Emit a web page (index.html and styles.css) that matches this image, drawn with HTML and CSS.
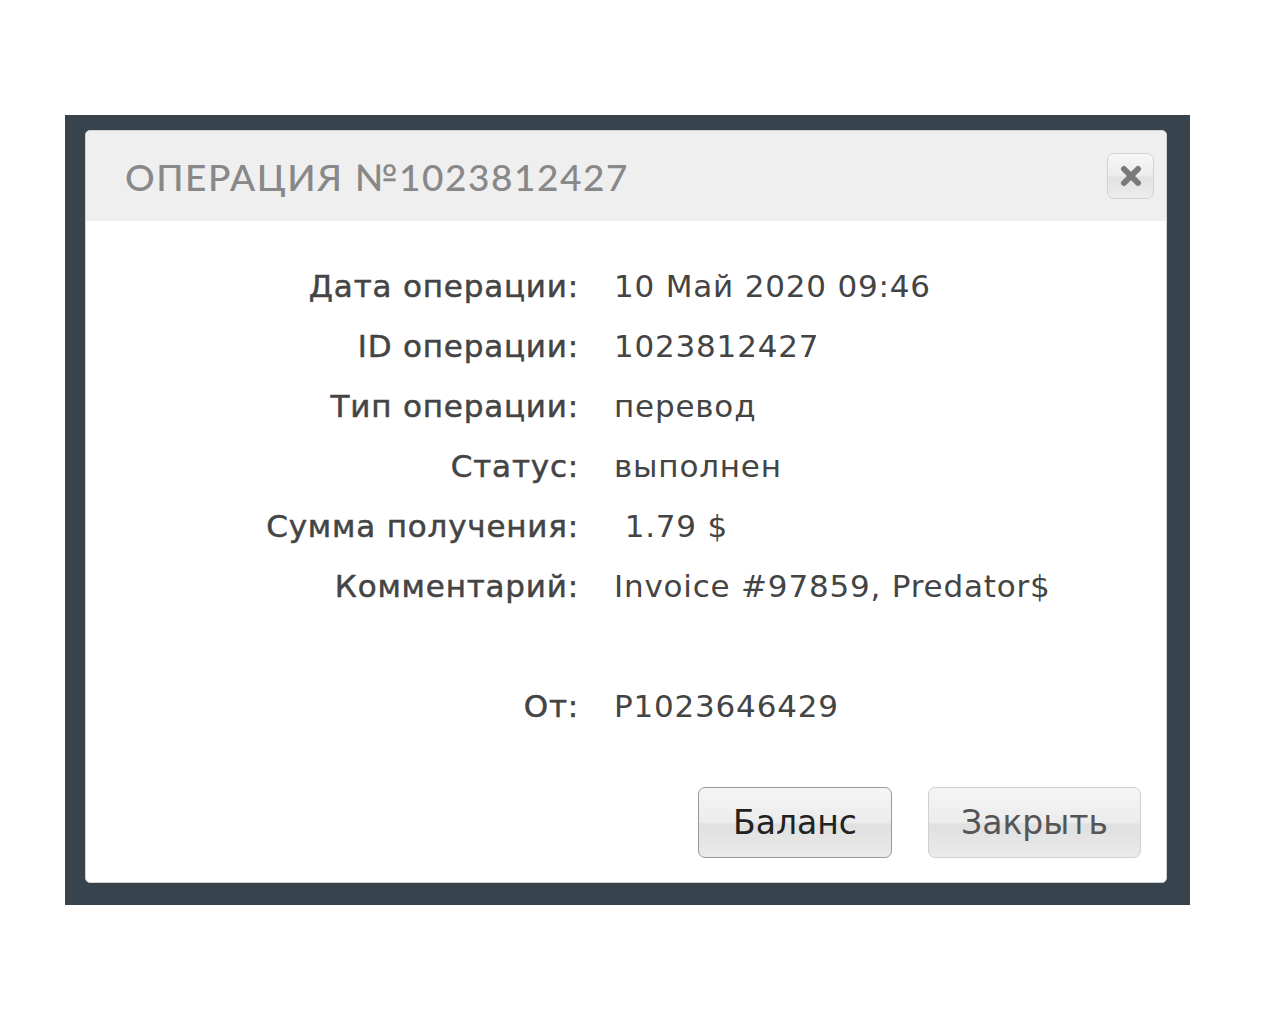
FILE: index.html
```html
<!DOCTYPE html>
<html lang="ru">
  <head>
    <meta charset="UTF-8" />
    <meta name="viewport" content="width=device-width, initial-scale=1.0" />
    <title>Операция</title>
    <link rel="stylesheet" href="styles.css">
  </head>
  <body>
    <div class="backdrop">
      <div class="modal">
        <header class="modal-head">
          <h1>ОПЕРАЦИЯ №1023812427</h1>
          <button class="close-x">
            <svg width="22" height="22" viewBox="0 0 22 22">
              <path d="M4 4 L18 18 M18 4 L4 18" stroke="#7a7a7a" stroke-width="6" stroke-linecap="round" />
            </svg>
          </button>
        </header>
        <div class="details">
          <div class="label">Дата операции:</div>
          <div class="value">10 Май 2020 09:46</div>
          <div class="label">ID операции:</div>
          <div class="value">1023812427</div>
          <div class="label">Тип операции:</div>
          <div class="value">перевод</div>
          <div class="label">Статус:</div>
          <div class="value">выполнен</div>
          <div class="label">Сумма получения:</div>
          <div class="value"> 1.79 $</div>
          <div class="label">Комментарий:</div>
          <div class="value">Invoice #97859, Predator$</div>
          <div class="label"></div>
          <div class="value"></div>
          <div class="label">От:</div>
          <div class="value">P1023646429</div>
        </div>
        <footer class="modal-foot">
          <button class="btn btn-main">Баланс</button>
          <button class="btn">Закрыть</button>
        </footer>
      </div>
    </div>
  </body>
</html>
```

FILE: styles.css
```css
body {
  margin: 0;
  padding: 0;
  background: #fff;
}
.backdrop {
  margin: 115px 0 0 65px;
  width: 1125px;
  height: 790px;
  box-sizing: border-box;
  padding: 15px 0 0 20px;
  background: #37444d;
}
.modal {
  width: 1082px;
  height: 753px;
  box-sizing: border-box;
  background: #fff;
  border: 1px solid #cfd2d4;
  border-radius: 5px;
  display: flex;
  flex-direction: column;
  overflow: hidden;
}
.modal-head {
  height: 90px;
  background: #efefef;
  display: flex;
  align-items: center;
  justify-content: space-between;
  padding: 0 12px 0 39px;
}
.modal-head h1 {
  margin: 0;
  font-family: Lato, "Open Sans", sans-serif;
  font-weight: 500;
  font-size: 37px;
  letter-spacing: 1.55px;
  color: #888;
}
.close-x {
  width: 47px;
  height: 46px;
  border: 1px solid #d2d2d2;
  border-radius: 7px;
  background: linear-gradient(#f7f7f7, #ececec 50%, #e2e2e2 52%, #ececec);
  padding: 0;
  display: flex;
  align-items: center;
  justify-content: center;
}
.details {
  display: grid;
  grid-template-columns: 493px 1fr;
  column-gap: 35px;
  grid-auto-rows: 60px;
  padding-top: 35px;
  font-family: "DejaVu Sans", Verdana, sans-serif;
  font-size: 31px;
  letter-spacing: 0.8px;
  color: #444;
}
.label,
.value {
  display: flex;
  align-items: center;
  white-space: pre;
}
.label {
  justify-content: flex-end;
  -webkit-text-stroke: 0.5px #444;
}
.modal-foot {
  display: flex;
  justify-content: flex-end;
  gap: 36px;
  padding: 51px 25px 0 0;
}
.btn {
  height: 71px;
  padding: 0 32px;
  border: 1px solid #d0d0d0;
  border-radius: 7px;
  background: linear-gradient(#f5f5f5, #ececec 50%, #e0e0e0 52%, #eaeaea);
  font-family: "DejaVu Sans", Verdana, sans-serif;
  font-size: 33px;
  color: #555;
}
.btn-main {
  border-color: #999;
  color: #222;
  padding: 0 34px;
}
```
